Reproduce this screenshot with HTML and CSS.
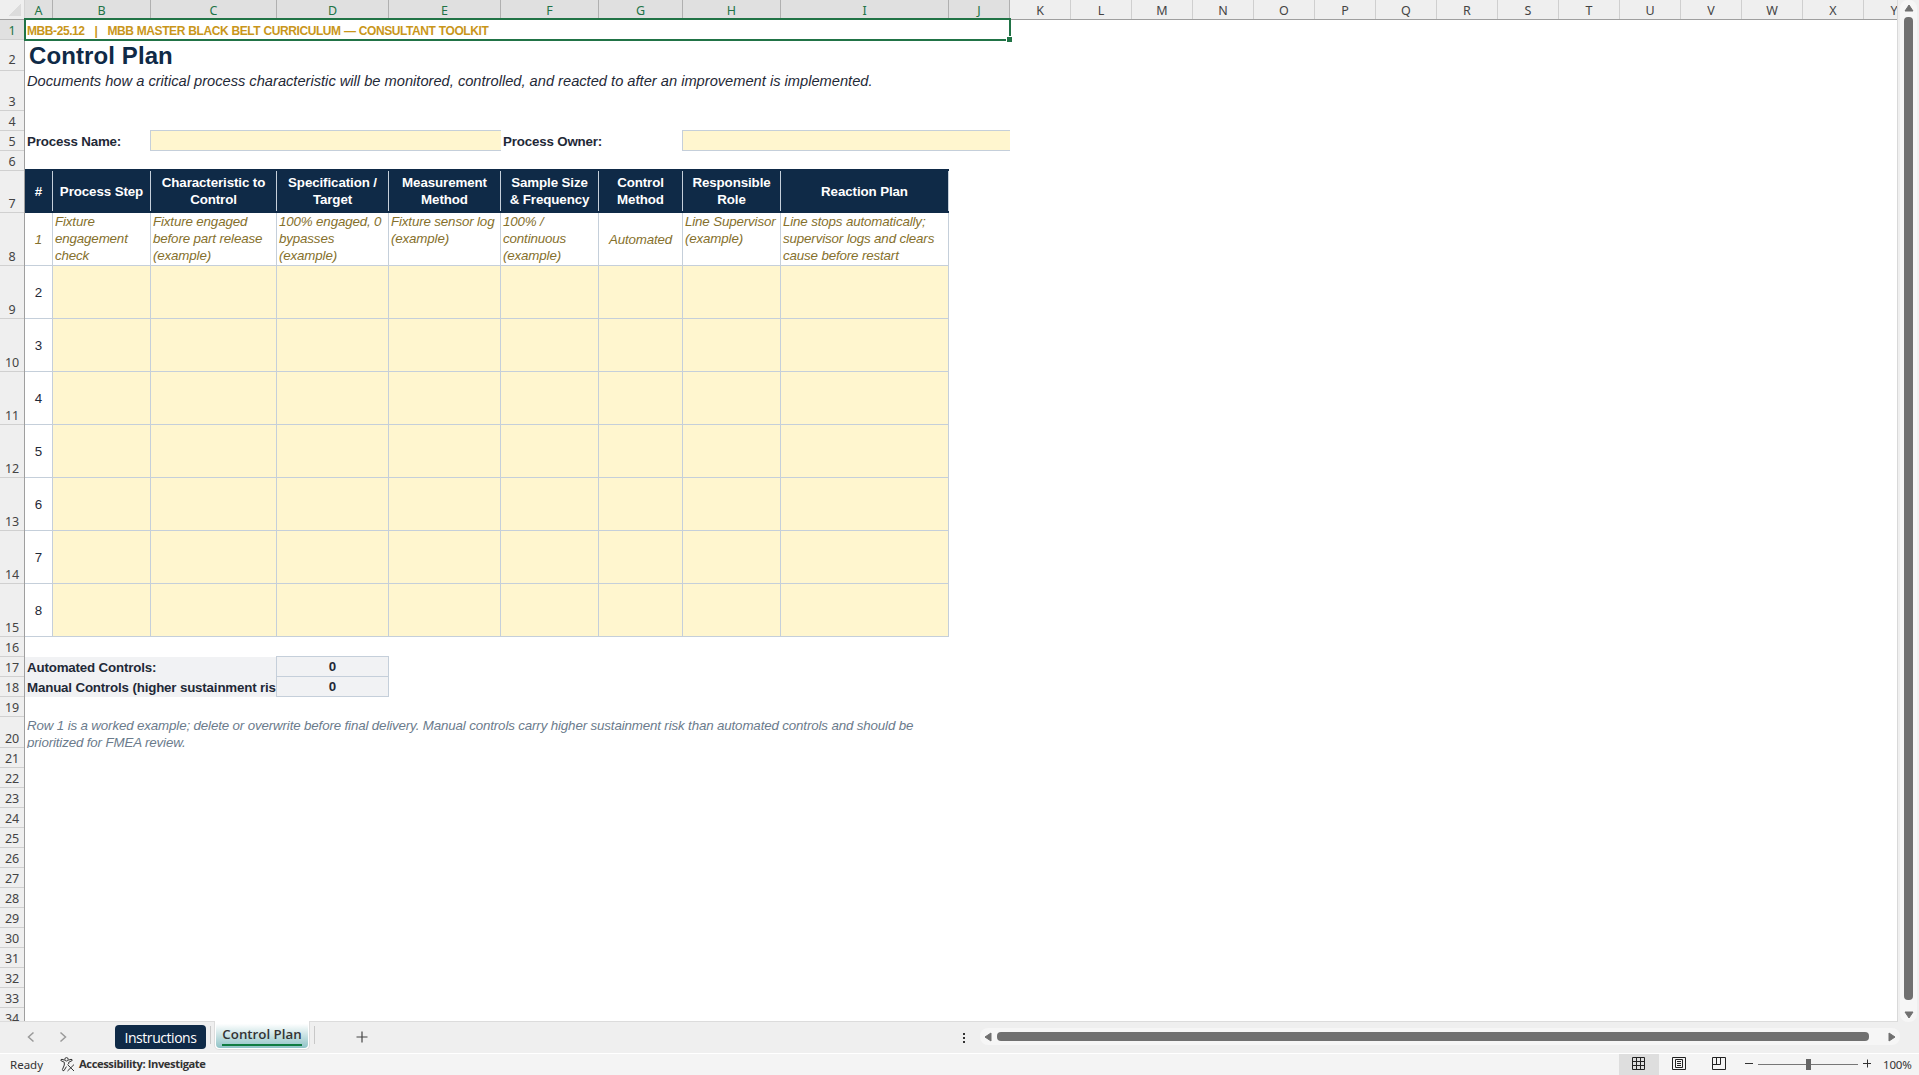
FILE: index.html
```
<!DOCTYPE html>
<html lang="en">
<head>
    <meta charset="UTF-8">
    <meta name="viewport" content="width=device-width, initial-scale=1.0">
    <title>Control Plan</title>
    <link rel="stylesheet" href="styles.css">
</head>
<body>
    <div class="workbook">
        <div class="sheet-area">
            <div class="sheet">
                <div class="col-headers" id="colHeaders">
                    <div class="corner"></div>
                </div>
                <div class="sheet-body">
                    <div class="row-headers" id="rowHeaders"></div>
                    <div class="cells">
                        <div class="row h20">
                            <div class="cell brand selected">MBB-25.12&nbsp;&nbsp; |&nbsp;&nbsp; MBB MASTER BLACK BELT CURRICULUM — CONSULTANT TOOLKIT<span class="fill-handle"></span></div>
                        </div>
                        <div class="row h31"><div class="cell title span-all">Control Plan</div></div>
                        <div class="row h40"><div class="cell subtitle span-all">Documents how a critical process characteristic will be monitored, controlled, and reacted to after an improvement is implemented.</div></div>
                        <div class="row h20"></div>
                        <div class="row h20">
                            <div class="cell label span-2">Process Name:</div>
                            <div class="cell field span-3"></div>
                            <div class="cell label span-2">Process Owner:</div>
                            <div class="cell field span-3"></div>
                        </div>
                        <div class="row h20"></div>
                        <div class="row h42 head">
                            <div class="cell"><span>#</span></div>
                            <div class="cell"><span>Process Step</span></div>
                            <div class="cell"><span>Characteristic to<br>Control</span></div>
                            <div class="cell"><span>Specification /<br>Target</span></div>
                            <div class="cell"><span>Measurement<br>Method</span></div>
                            <div class="cell"><span>Sample Size<br>&amp; Frequency</span></div>
                            <div class="cell"><span>Control<br>Method</span></div>
                            <div class="cell"><span>Responsible<br>Role</span></div>
                            <div class="cell"><span>Reaction Plan</span></div>
                        </div>
                        <div class="row h53 example">
                            <div class="cell middle">1</div>
                            <div class="cell">Fixture<br>engagement<br>check</div>
                            <div class="cell">Fixture engaged<br>before part release<br>(example)</div>
                            <div class="cell">100% engaged, 0<br>bypasses<br>(example)</div>
                            <div class="cell">Fixture sensor log<br>(example)</div>
                            <div class="cell">100% /<br>continuous<br>(example)</div>
                            <div class="cell middle">Automated</div>
                            <div class="cell">Line Supervisor<br>(example)</div>
                            <div class="cell">Line stops automatically;<br>supervisor logs and clears<br>cause before restart</div>
                        </div>
                        <div id="inputRows"></div>
                        <div class="row h20"></div>
                        <div class="row h20 summary">
                            <div class="cell label span-3">Automated Controls:</div>
                            <div class="cell count">0</div>
                        </div>
                        <div class="row h20 summary">
                            <div class="cell label span-3">Manual Controls (higher sustainment risk):</div>
                            <div class="cell count">0</div>
                        </div>
                        <div class="row h20"></div>
                        <div class="row h31">
                            <div class="cell note span-all">Row 1 is a worked example; delete or overwrite before final delivery. Manual controls carry higher sustainment risk than automated controls and should be<br>prioritized for FMEA review.</div>
                        </div>
                    </div>
                </div>
            </div>
            <div class="v-scroll">
                <svg width="10" height="8" viewBox="0 0 10 8"><path d="M5 1 L9 7 H1 Z"/></svg>
                <div class="v-thumb"></div>
                <svg width="10" height="8" viewBox="0 0 10 8"><path d="M1 1 H9 L5 7 Z"/></svg>
            </div>
        </div>

        <div class="tab-bar">
            <svg class="nav prev" width="8" height="12" viewBox="0 0 8 12"><path d="M6.5 1.5 L1.5 6 L6.5 10.5"/></svg>
            <svg class="nav next" width="8" height="12" viewBox="0 0 8 12"><path d="M1.5 1.5 L6.5 6 L1.5 10.5"/></svg>
            <div class="tab">Instructions</div>
            <div class="tab-sep"></div>
            <div class="tab-active"><div class="tab-fill"><span>Control Plan</span></div></div>
            <div class="tab-sep"></div>
            <svg class="add" width="12" height="12" viewBox="0 0 12 12"><path d="M6 0.5 V11.5 M0.5 6 H11.5"/></svg>
            <div class="dots"><i></i><i></i><i></i></div>
            <div class="h-scroll">
                <svg width="8" height="10" viewBox="0 0 8 10"><path d="M7 1 V9 L1 5 Z"/></svg>
                <div class="h-thumb"></div>
                <svg width="8" height="10" viewBox="0 0 8 10"><path d="M1 1 V9 L7 5 Z"/></svg>
            </div>
        </div>

        <div class="status-bar">
            <span class="ready">Ready</span>
            <svg class="acc-icon" width="15" height="15" viewBox="0 0 15 15">
                <circle cx="6.5" cy="2.3" r="1.7"/>
                <path d="M4.6 3.2 L2 2.3 Q0.6 2.3 0.8 3.5 L4.3 5.3 V8 L2.4 12.6 Q2.6 14.2 4 13.6 L6.4 9.6 M8.4 3.2 L11 2.3 Q12.4 2.3 12.2 3.5 L8.7 5.3 V7.2 M7.5 7.6 L14 14 M14 7.6 L7.5 14"/>
            </svg>
            <span class="accessibility">Accessibility: Investigate</span>
            <div class="view-btn active">
                <svg width="14" height="14" viewBox="0 0 14 14"><path d="M0.5 0.5 H12.5 V12.5 H0.5 Z M4.5 0.5 V12.5 M8.5 0.5 V12.5 M0.5 4.5 H12.5 M0.5 8.5 H12.5"/></svg>
            </div>
            <div class="view-btn">
                <svg width="14" height="14" viewBox="0 0 14 14"><path d="M0.5 0.5 H13.5 V12.5 H0.5 Z M3.5 2.5 H10.5 V10.5 H3.5 Z M5 4.5 H9 M5 6.5 H9 M5 8.5 H9"/></svg>
            </div>
            <div class="view-btn">
                <svg width="14" height="14" viewBox="0 0 14 14"><path d="M0.5 0.5 H13.5 V12.5 H0.5 Z M4.5 0.5 V7.5 M8.5 0.5 V7.5 M0.5 7.5 H8.5"/></svg>
            </div>
            <svg class="zoom-slider" width="128" height="14" viewBox="0 0 128 14">
                <path class="zoom-sign" d="M0 6.5 H8 M118 6.5 H126 M122.5 2.5 V10.5"/>
                <path class="zoom-track" d="M13 7.5 H113"/>
                <rect x="61" y="2" width="5" height="11"/>
            </svg>
            <span class="zoom-value">100%</span>
        </div>
    </div>

    <script>
        const colWidths = [28, 98, 126, 112, 112, 98, 84, 98, 168, 61];
        const rowHeights = [20, 31, 40, 20, 20, 20, 42, 53, 53, 53, 53, 53, 53, 53, 53, 20, 20, 20, 20, 31];

        // Column letters A to Y
        const colHeaders = document.getElementById('colHeaders');
        for (let i = 0; i < 25; i++) {
            const col = document.createElement('div');
            col.className = i < 10 ? 'col-header active' : 'col-header';
            col.style.width = (colWidths[i] || 61) + 'px';
            col.textContent = String.fromCharCode(65 + i);
            colHeaders.appendChild(col);
        }

        // Row numbers
        const rowHeaders = document.getElementById('rowHeaders');
        for (let i = 0; i < 34; i++) {
            const row = document.createElement('div');
            row.className = i === 0 ? 'row-header active' : 'row-header';
            row.style.height = (rowHeights[i] || 20) + 'px';
            row.textContent = i + 1;
            rowHeaders.appendChild(row);
        }

        // Blank input rows 2 to 8
        const inputRows = document.getElementById('inputRows');
        for (let n = 2; n <= 8; n++) {
            inputRows.innerHTML += `<div class="row h53 input"><div class="cell middle">${n}</div>${'<div class="cell"></div>'.repeat(8)}</div>`;
        }
    </script>
</body>
</html>
```
FILE: styles.css
```
* {
    margin: 0;
    padding: 0;
    box-sizing: border-box;
}

body {
    width: 100vw;
    height: 100vh;
    overflow: hidden;
    background: #efefef;
    font-family: "Liberation Sans", Arial, sans-serif;
    color: #1f2937;
}

.workbook {
    display: flex;
    flex-direction: column;
    height: 100vh;
}

.sheet-area {
    display: flex;
    height: 1022px;
}

.sheet {
    width: 1898px;
    overflow: hidden;
    background: #fff;
    border-right: 1px solid #d9d9d9;
    border-bottom: 1px solid #dcdcdc;
}

/* Headers */
.col-headers {
    display: flex;
    height: 20px;
    background: #efefef;
    border-bottom: 1px solid #9f9f9f;
}

.corner {
    width: 25px;
    flex-shrink: 0;
    background: linear-gradient(135deg, transparent 50%, #dcdcdc 50%) 9px 4px / 12px 12px no-repeat;
    border-right: 1px solid #d4d4d4;
}

.col-header {
    flex-shrink: 0;
    height: 19px;
    border-right: 1px solid #cfcfcf;
    font-family: "Noto Sans", sans-serif;
    font-size: 12.5px;
    line-height: 21px;
    text-align: center;
    color: #444;
}

.col-header.active {
    background: #e0e0e0;
    border-right-color: #b0b0b0;
    color: #217346;
}

.sheet-body {
    display: flex;
}

.row-headers {
    width: 25px;
    flex-shrink: 0;
    background: #efefef;
    border-right: 1px solid #9f9f9f;
}

.row-header {
    display: flex;
    align-items: flex-end;
    justify-content: center;
    border-bottom: 1px solid #d0d0d0;
    font-family: "Noto Sans", sans-serif;
    font-size: 12.5px;
    line-height: 17px;
    letter-spacing: -0.2px;
    color: #444;
}

.row-header:nth-child(2) {
    padding-bottom: 2px;
}

.row-header.active {
    background: #e0e0e0;
    color: #217346;
}

/* Cells */
.row {
    display: grid;
    grid-template-columns: 28px 98px 126px 112px 112px 98px 84px 98px 168px 61px;
}

.h20 { height: 20px; }
.h31 { height: 31px; }
.h40 { height: 40px; }
.h42 { height: 42px; }
.h53 { height: 53px; }

.span-2 { grid-column: span 2; }
.span-3 { grid-column: span 3; }
.span-all { grid-column: 1 / -1; }

.cell {
    padding: 0 2px;
    font-size: 13.33px;
    line-height: 17px;
    white-space: nowrap;
    overflow: hidden;
}

.brand {
    grid-column: 1 / -1;
    font-size: 12px;
    font-weight: bold;
    line-height: 20px;
    letter-spacing: -0.42px;
    word-spacing: 0.4px;
    color: #c9961a;
}

.selected {
    position: relative;
    height: 23px;
    margin: -2px -1px 0 -1px;
    padding: 1px 1px 0;
    border: 2px solid #217346;
    overflow: visible;
}

.fill-handle {
    position: absolute;
    right: -3px;
    bottom: -3px;
    width: 6px;
    height: 6px;
    background: #217346;
    border-top: 1px solid #fff;
    border-left: 1px solid #fff;
}

.title {
    padding-left: 4px;
    font-size: 24px;
    font-weight: bold;
    line-height: 32px;
    letter-spacing: 0.1px;
    color: #0f2a47;
}

.subtitle {
    font-size: 14.67px;
    font-style: italic;
    line-height: 20px;
}

.label {
    font-weight: bold;
    line-height: 21px;
    letter-spacing: -0.17px;
}

.field {
    height: 21px;
    margin: -1px 0 0 -1px;
    background: #fff6cf;
    border: 1px solid #c5cfda;
    border-right: none;
}

.head {
    height: 44px;
    margin-top: -2px;
    padding: 2px 0;
    background: linear-gradient(#0f2a47, #0f2a47) 0 0 / 924px 100% no-repeat;
}

.head .cell {
    display: flex;
    align-items: center;
    justify-content: center;
    border-right: 1px solid #c5cfda;
    font-weight: bold;
    text-align: center;
    letter-spacing: -0.1px;
    color: #fff;
}

.example .cell,
.input .cell {
    border-right: 1px solid #c5cfda;
    border-bottom: 1px solid #c5cfda;
}

.example .cell {
    font-style: italic;
    letter-spacing: -0.14px;
    color: #85702c;
}

.input .cell {
    background: #fff6cf;
}

.example .middle,
.input .middle {
    display: flex;
    align-items: center;
    justify-content: center;
    background: #fff;
}

.summary .label {
    background: #f1f2f4;
}

.count {
    height: 21px;
    margin: -1px 0 0 -1px;
    background: #f1f2f4;
    border: 1px solid #c5cfda;
    font-weight: bold;
    line-height: 19px;
    text-align: center;
}

.note {
    font-style: italic;
    letter-spacing: -0.142px;
    color: #6b7b8c;
}

/* Vertical scrollbar */
.v-scroll {
    display: flex;
    flex-direction: column;
    align-items: center;
    gap: 4px;
    width: 17px;
    margin-left: 2px;
    padding: 4px 0 3px;
    background: #f6f6f6;
    border-radius: 8px;
}

.v-scroll path,
.h-scroll path {
    fill: #707070;
    stroke: #707070;
    stroke-linejoin: round;
}

.v-thumb {
    flex: 1;
    width: 9px;
    margin: 1px 0 7px;
    background: #707070;
    border-radius: 4px;
}

/* Sheet tabs */
.tab-bar {
    display: flex;
    height: 31px;
    background: #efefef;
    font-family: "Open Sans", sans-serif;
}

.nav,
.add {
    fill: none;
    stroke: #9a9a9a;
    stroke-width: 1.5;
}

.prev {
    margin: 9px 0 0 27px;
}

.next {
    margin: 9px 0 0 24px;
}

.tab {
    width: 91px;
    height: 24px;
    margin: 3px 4px 0 48px;
    background: #0f2a47;
    border-radius: 4px;
    font-size: 14px;
    line-height: 25px;
    letter-spacing: -0.45px;
    text-align: center;
    color: #fff;
}

.tab-sep {
    width: 1px;
    height: 18px;
    margin-top: 4px;
    background: #c8c8c8;
}

.tab-active {
    width: 96px;
    height: 29px;
    margin: -1px 4px 0 3px;
    padding: 0 1px;
    background: #fff;
    border: 1px solid #dcdcdc;
    border-top: none;
    border-radius: 0 0 5px 5px;
}

.tab-fill {
    height: 27px;
    background: linear-gradient(#fff 10%, #8fc3c6);
    border-radius: 0 0 4px 4px;
    text-align: center;
}

.tab-fill span {
    display: inline-block;
    height: 25px;
    border-bottom: 2px solid #107c41;
    font-size: 13.3px;
    font-weight: 600;
    line-height: 27px;
    color: #333;
}

.add {
    margin: 9px 0 0 41px;
    stroke: #444;
    stroke-width: 1.2;
}

.dots {
    display: flex;
    flex-direction: column;
    gap: 2px;
    margin: 11px 15px 0 auto;
}

.dots i {
    width: 2px;
    height: 2px;
    background: #333;
}

.h-scroll {
    display: flex;
    align-items: center;
    width: 920px;
    height: 17px;
    margin: 6px 19px 0 0;
    padding: 0 4px 0 4px;
    background: #f6f6f6;
    border-radius: 8px;
}

.h-thumb {
    flex: 1;
    height: 9px;
    margin: 0 19px 0 5px;
    background: #707070;
    border-radius: 4px;
}

/* Status bar */
.status-bar {
    display: flex;
    align-items: center;
    height: 22px;
    background: #f4f4f4;
    border-top: 1px solid #fff;
    font-family: "Noto Sans", sans-serif;
    font-size: 11.5px;
    color: #333;
}

.ready {
    width: 50px;
    margin-left: 10px;
}

.acc-icon {
    fill: none;
    stroke: #333;
}

.accessibility {
    margin: -2px auto 0 4px;
    font-family: "Open Sans", sans-serif;
    font-size: 11.2px;
    font-weight: 700;
    letter-spacing: -0.42px;
}

.view-btn {
    display: flex;
    justify-content: center;
    align-items: center;
    width: 40px;
    height: 21px;
}

.view-btn.active {
    background: #dedede;
}

.view-btn svg {
    margin-top: -1px;
    fill: none;
    stroke: #222;
}

.zoom-slider {
    margin: -1px 0 0 6px;
    fill: #666;
}

.zoom-sign {
    stroke: #333;
}

.zoom-track {
    stroke: #777;
}

.zoom-value {
    width: 36px;
    margin-left: 10px;
    letter-spacing: -0.2px;
}
```
